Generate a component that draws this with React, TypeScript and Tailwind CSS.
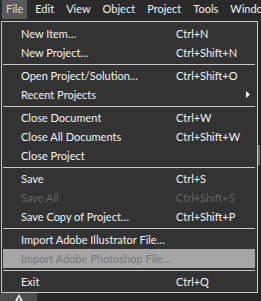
const menuBar = ['File', 'Edit', 'View', 'Object', 'Project', 'Tools', 'Window'];

type Item = {
    label?: string;
    shortcut?: string;
    disabled?: boolean;
    active?: boolean;
    submenu?: boolean;
    separator?: boolean;
};

const items: Item[] = [
    { label: 'New Item…', shortcut: 'Ctrl+N' },
    { label: 'New Project…', shortcut: 'Ctrl+Shift+N' },
    { separator: true },
    { label: 'Open Project/Solution…', shortcut: 'Ctrl+Shift+O' },
    { label: 'Recent Projects', submenu: true },
    { separator: true },
    { label: 'Close Document', shortcut: 'Ctrl+W' },
    { label: 'Close All Documents', shortcut: 'Ctrl+Shift+W' },
    { label: 'Close Project' },
    { separator: true },
    { label: 'Save', shortcut: 'Ctrl+S' },
    { label: 'Save All', shortcut: 'Ctrl+Shift+S', disabled: true },
    { label: 'Save Copy of Project…', shortcut: 'Ctrl+Shift+P' },
    { separator: true },
    { label: 'Import Adobe Illustrator File…' },
    { label: 'Import Adobe Photoshop File…', disabled: true, active: true },
    { separator: true },
    { label: 'Exit', shortcut: 'Ctrl+Q' },
];

export default function App() {
    return (
        <div
            className="w-[261px] h-[301px] overflow-hidden bg-[#2a2a2a] flex flex-col"
            style={{ fontFamily: 'Lato, "Noto Sans", sans-serif' }}
        >
            {/* Menu bar */}
            <div className="h-[21px] shrink-0 flex items-start pl-[2px] gap-[4px] text-[11px] whitespace-nowrap">
                {menuBar.map((name, i) => (
                    <div
                        key={name}
                        className={`h-[19px] px-[4px] flex items-center ${i === 0 ? 'bg-[#5a5a5a] text-[#d8d8d8]' : 'text-[#f2f2f2]'}`}
                    >
                        {name}
                    </div>
                ))}
            </div>

            <div className="flex">
                {/* Dropdown */}
                <div className="ml-[1px] w-[257px] shrink-0 border border-[#c9c9c9] bg-[#333333] pt-[2px] pb-[1px] pl-[1px] pr-[2px] text-[11px]">
                    {items.map((item, i) =>
                        item.separator ? (
                            <div key={i} className="h-px mt-[2px] mb-[1px] bg-[#c9c9c9]" />
                        ) : (
                            <div
                                key={i}
                                className={`relative h-[19px] flex items-center pt-[1px] pl-[18px] whitespace-nowrap ${item.active ? 'bg-[#a6a6a6]' : ''} ${item.disabled ? (item.active ? 'text-[#787878]' : 'text-[#666666]') : 'text-[#f2f2f2]'}`}
                            >
                                <span className="w-[155px] shrink-0">{item.label}</span>
                                {item.shortcut && <span>{item.shortcut}</span>}
                                {item.submenu && (
                                    <svg className="absolute right-[5px] top-[6px]" width="4" height="7" viewBox="0 0 4 7">
                                        <path d="M0 0 L4 3.5 L0 7 Z" fill="#f2f2f2" />
                                    </svg>
                                )}
                            </div>
                        )
                    )}
                </div>

                {/* Scrollbar sliver on the right */}
                <div className="flex-1 bg-[#262626] pt-[124px]">
                    <div className="h-[20px] w-[2px] bg-[#6e6e6e]" />
                </div>
            </div>

            {/* Toolbar peeking below the menu */}
            <div className="flex-1 flex bg-[#262626]">
                <div className="w-[37px] bg-[#4c4c4c] flex justify-center pt-[1px]">
                    <svg width="10" height="7" viewBox="0 0 10 7">
                        <path d="M5 0 L9 7 L6.5 7 L5 3 L3.5 7 L1 7 Z" fill="#e8e8e8" />
                    </svg>
                </div>
            </div>
        </div>
    );
}
